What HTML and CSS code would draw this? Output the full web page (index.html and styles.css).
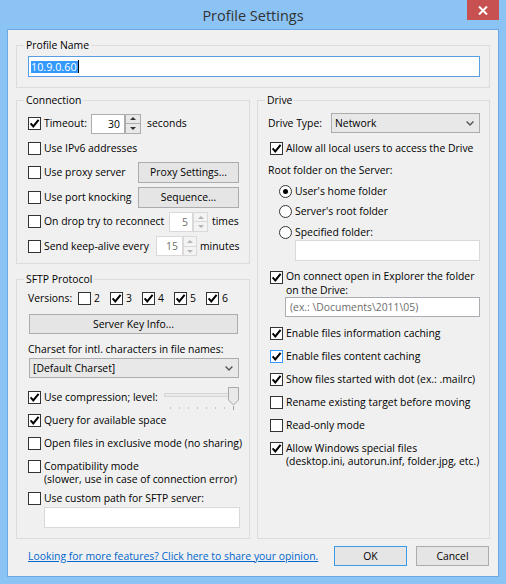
FILE: index.html
```html
<!DOCTYPE html>
<html>
<head>
<meta charset="utf-8">
<title>Profile Settings</title>
<link rel="stylesheet" href="styles.css">
</head>
<body>
<div class="window">
  <div class="titlebar">
    <div class="tb-spacer"></div>
    <div class="title">Profile Settings</div>
    <div class="close"><svg width="10" height="9" viewBox="0 0 10 9"><path d="M1 0.5 9 8.5 M9 0.5 1 8.5" stroke="#fff" stroke-width="2"/></svg></div>
  </div>
  <div class="client">
    <div class="group g-profile">
      <div class="legend">Profile Name</div>
      <div class="textbox focused"><span class="sel">10.9.0.60</span><span class="caret"></span></div>
    </div>

    <div class="columns">
      <div class="col-left">
        <div class="group g-conn">
          <div class="legend">Connection</div>
          <div class="rows">
            <div class="row">
              <div class="cbl w-timeout"><span class="cb"><svg viewBox="0 0 11 11"><path d="M1.6 5.4 4.3 8.4 9.6 1.8" /></svg></span>Timeout:</div>
              <div class="spin"><div class="spin-val sv-timeout">30</div><div class="spin-btns sb-16"><span class="up"></span><span class="down"></span></div></div>
              <span class="unit u-seconds">seconds</span>
            </div>
            <div class="row">
              <div class="cbl"><span class="cb"></span>Use IPv6 addresses</div>
            </div>
            <div class="row">
              <div class="cbl w-proxy"><span class="cb"></span>Use proxy server</div>
              <div class="btn btn-conn">Proxy Settings...</div>
            </div>
            <div class="row">
              <div class="cbl w-proxy"><span class="cb"></span>Use port knocking</div>
              <div class="btn btn-conn">Sequence...</div>
            </div>
            <div class="row">
              <div class="cbl w-drop"><span class="cb"></span>On drop try to reconnect</div>
              <div class="spin dis"><div class="spin-val sv-drop">5</div><div class="spin-btns sb-15"><span class="up"></span><span class="down"></span></div></div>
              <span class="unit u-times">times</span>
            </div>
            <div class="row">
              <div class="cbl w-keep"><span class="cb"></span>Send keep-alive every</div>
              <div class="spin dis"><div class="spin-val sv-keep">15</div><div class="spin-btns sb-14"><span class="up"></span><span class="down"></span></div></div>
              <span class="unit u-minutes">minutes</span>
            </div>
          </div>
        </div>

        <div class="group g-sftp">
          <div class="legend">SFTP Protocol</div>
          <div class="row versions">
            <span class="ver-label">Versions:</span>
            <div class="ver"><span class="cb"></span>2</div>
            <div class="ver"><span class="cb"><svg viewBox="0 0 11 11"><path d="M1.6 5.4 4.3 8.4 9.6 1.8" /></svg></span>3</div>
            <div class="ver"><span class="cb"><svg viewBox="0 0 11 11"><path d="M1.6 5.4 4.3 8.4 9.6 1.8" /></svg></span>4</div>
            <div class="ver"><span class="cb"><svg viewBox="0 0 11 11"><path d="M1.6 5.4 4.3 8.4 9.6 1.8" /></svg></span>5</div>
            <div class="ver"><span class="cb"><svg viewBox="0 0 11 11"><path d="M1.6 5.4 4.3 8.4 9.6 1.8" /></svg></span>6</div>
          </div>
          <div class="btn btn-key">Server Key Info...</div>
          <div class="plain charset-label">Charset for intl. characters in file names:</div>
          <div class="select sel-charset"><span class="sel-val">[Default Charset]</span><svg class="chev" width="8" height="5" viewBox="0 0 8 5"><path d="M0.6 0.6 4 4 7.4 0.6" /></svg></div>
          <div class="row comp-row">
            <div class="cbl w-comp"><span class="cb"><svg viewBox="0 0 11 11"><path d="M1.6 5.4 4.3 8.4 9.6 1.8" /></svg></span>Use compression; level:</div>
            <svg class="slider" width="76" height="24" viewBox="0 0 76 24">
              <rect x="0.5" y="6.5" width="69" height="3" fill="#e7eaea" stroke="#d6d6d6"/>
              <g fill="#c4c4c4">
                <rect x="6" y="20" width="1" height="2"/>
                <rect x="15" y="20" width="1" height="2"/>
                <rect x="24" y="20" width="1" height="2"/>
                <rect x="33" y="20" width="1" height="2"/>
                <rect x="42" y="20" width="1" height="2"/>
                <rect x="51" y="20" width="1" height="2"/>
                <rect x="60" y="20" width="1" height="2"/>
              </g>
              <rect x="69" y="19" width="1" height="4" fill="#a0a0a0"/>
              <path d="M64.5 0.5 H74.5 V13 L69.5 18 L64.5 13 Z" fill="#e9e9e9" stroke="#a8a8a8"/>
            </svg>
          </div>
          <div class="row cbrow query-row">
            <div class="cbl"><span class="cb"><svg viewBox="0 0 11 11"><path d="M1.6 5.4 4.3 8.4 9.6 1.8" /></svg></span>Query for available space</div>
          </div>
          <div class="row cbrow excl-row">
            <div class="cbl"><span class="cb"></span>Open files in exclusive mode (no sharing)</div>
          </div>
          <div class="cbl multi compat-row"><span class="cb"></span><span class="ml13">Compatibility mode<br>(slower, use in case of connection error)</span></div>
          <div class="row cbrow custom-row">
            <div class="cbl"><span class="cb"></span>Use custom path for SFTP server:</div>
          </div>
          <div class="textbox dis tb-custom"></div>
        </div>
      </div>

      <div class="group g-drive">
        <div class="legend">Drive</div>
        <div class="row drive-type">
          <span class="dt-label">Drive Type:</span>
          <div class="select sel-drive"><span class="sel-val">Network</span><svg class="chev" width="8" height="5" viewBox="0 0 8 5"><path d="M0.6 0.6 4 4 7.4 0.6" /></svg></div>
        </div>
        <div class="row cbrow d-allow">
          <div class="cbl"><span class="cb"><svg viewBox="0 0 11 11"><path d="M1.6 5.4 4.3 8.4 9.6 1.8" /></svg></span>Allow all local users to access the Drive</div>
        </div>
        <div class="plain root-label">Root folder on the Server:</div>
        <div class="row cbrow radio-row r1"><div class="cbl"><span class="rb on"></span>User's home folder</div></div>
        <div class="row cbrow radio-row r2"><div class="cbl"><span class="rb"></span>Server's root folder</div></div>
        <div class="row cbrow radio-row r3"><div class="cbl"><span class="rb"></span>Specified folder:</div></div>
        <div class="textbox dis tb-spec"></div>
        <div class="cbl multi d-connect"><span class="cb cb-down"><svg viewBox="0 0 11 11"><path d="M1.6 5.4 4.3 8.4 9.6 1.8" /></svg></span><span class="ml14">On connect open in Explorer the folder<br>on the Drive:</span></div>
        <div class="textbox tb-ex"><span class="ph">(ex.: \Documents\2011\05)</span></div>
        <div class="row cbrow d-r d-first"><div class="cbl"><span class="cb"><svg viewBox="0 0 11 11"><path d="M1.6 5.4 4.3 8.4 9.6 1.8" /></svg></span>Enable files information caching</div></div>
        <div class="row cbrow d-r"><div class="cbl"><span class="cb hover"><svg viewBox="0 0 11 11"><path d="M1.6 5.4 4.3 8.4 9.6 1.8" /></svg></span>Enable files content caching</div></div>
        <div class="row cbrow d-r"><div class="cbl"><span class="cb"><svg viewBox="0 0 11 11"><path d="M1.6 5.4 4.3 8.4 9.6 1.8" /></svg></span>Show files started with dot (ex.: .mailrc)</div></div>
        <div class="row cbrow d-r"><div class="cbl"><span class="cb"></span>Rename existing target before moving</div></div>
        <div class="row cbrow d-r"><div class="cbl"><span class="cb"></span>Read-only mode</div></div>
        <div class="cbl multi d-special"><span class="cb"><svg viewBox="0 0 11 11"><path d="M1.6 5.4 4.3 8.4 9.6 1.8" /></svg></span><span class="ml13">Allow Windows special files<br>(desktop.ini, autorun.inf, folder.jpg, etc.)</span></div>
      </div>
    </div>

    <div class="footer">
      <a class="link" href="#">Looking for more features? Click here to share your opinion.</a>
      <div class="buttons">
        <div class="btn btn-dlg default">OK</div>
        <div class="btn btn-dlg">Cancel</div>
      </div>
    </div>
  </div>
</div>
</body>
</html>
```

FILE: styles.css
```css
* { box-sizing: border-box; }

body {
  margin: 0;
  font-family: "Open Sans", "Segoe UI", "Noto Sans", sans-serif;
  font-size: 10.4px;
  line-height: 13px;
  color: #000;
}

.window {
  width: 506px;
  height: 584px;
  background: #8bc3f5;
  display: flex;
  flex-direction: column;
  padding: 0 7px 7px 7px;
}

.titlebar {
  height: 29px;
  display: flex;
  align-items: flex-start;
  flex: none;
}
.tb-spacer { width: 32px; flex: none; }
.title {
  flex: 1;
  text-align: center;
  font-size: 14.5px;
  line-height: 29px;
  padding-top: 1px;
  color: #333;
}
.close {
  width: 32px;
  height: 20px;
  flex: none;
  background: #c75050;
  display: flex;
  align-items: center;
  justify-content: center;
}

.client {
  flex: 1;
  background: #f0f0f0;
  border: 1px solid #6aa9e4;
  padding: 15px 8px 0 8px;
  display: flex;
  flex-direction: column;
}

.group {
  border: 1px solid #dcdcdc;
  display: flex;
  flex-direction: column;
  flex: none;
}
.legend {
  align-self: flex-start;
  background: #f0f0f0;
  padding: 0 2px;
  line-height: 16px;
  margin-top: -9px;
  margin-left: -4px;
}

.row { display: flex; align-items: center; flex: none; }
.cbrow { height: 16px; }

.cbl {
  display: flex;
  align-items: center;
  gap: 3px;
  white-space: nowrap;
  flex: none;
}
.cbl.multi { align-items: flex-start; }

.cb {
  width: 13px;
  height: 13px;
  border: 1px solid #333;
  background: #fff;
  flex: none;
  display: flex;
  align-items: center;
  justify-content: center;
}
.cb svg { width: 11px; height: 11px; display: block; }
.cb svg path { fill: none; stroke: #000; stroke-width: 2; }
.cb.hover { border-color: #3399ff; }

.rb {
  width: 13px;
  height: 13px;
  border: 1px solid #333;
  border-radius: 50%;
  background: #fff;
  flex: none;
  display: flex;
  align-items: center;
  justify-content: center;
}
.rb.on::after {
  content: "";
  width: 5px;
  height: 5px;
  border-radius: 50%;
  background: #000;
}

.textbox {
  height: 21px;
  border: 1px solid #abadb3;
  background: #fff;
  display: flex;
  align-items: center;
  padding-left: 2px;
  flex: none;
}
.textbox.focused { border-color: #569de5; }
.textbox.dis { border-color: #d9d9d9; }
.sel {
  background: #3399ff;
  color: #fff;
  line-height: 12px;
  font-size: 10.8px;
  padding: 0 1px 0 0;
}
.caret { width: 1px; height: 13px; background: #000; }
.ph { color: #6d6d6d; padding-left: 2px; }

.btn {
  height: 20px;
  border: 1px solid #acacac;
  background: #e5e5e5;
  display: flex;
  align-items: center;
  justify-content: center;
  flex: none;
  white-space: nowrap;
}

.select {
  height: 20px;
  border: 1px solid #acacac;
  background: #e8e8e8;
  display: flex;
  align-items: center;
  padding-left: 3px;
  flex: none;
}
.sel-val { flex: 1; }
.chev { margin-right: 5px; flex: none; }
.chev path { fill: none; stroke: #555; stroke-width: 1.4; }

.spin { display: flex; height: 20px; flex: none; }
.spin-val {
  border: 1px solid #abadb3;
  background: #fff;
  text-align: right;
  padding-right: 4px;
  line-height: 18px;
}
.spin-btns {
  display: flex;
  flex-direction: column;
  height: 20px;
}
.spin-btns span {
  flex: 1;
  border: 1px solid #acacac;
  background: #e8e8e8;
  display: flex;
  align-items: center;
  justify-content: center;
}
.spin-btns span + span { border-top: none; }
.spin-btns .up::after {
  content: "";
  border-left: 3px solid transparent;
  border-right: 3px solid transparent;
  border-bottom: 3px solid #333;
}
.spin-btns .down::after {
  content: "";
  border-left: 3px solid transparent;
  border-right: 3px solid transparent;
  border-top: 3px solid #333;
}
.spin.dis .spin-val { color: #6d6d6d; border-color: #d9d9d9; }
.spin.dis .spin-btns span { border-color: #d9d9d9; background: #f3f3f3; }
.spin.dis .spin-btns .up::after { border-bottom-color: #b5b5b5; }
.spin.dis .spin-btns .down::after { border-top-color: #b5b5b5; }

.sb-16 { width: 16px; }
.sb-15 { width: 15px; }
.sb-14 { width: 14px; }
.sv-timeout { width: 34px; }
.sv-drop { width: 24px; }
.sv-keep { width: 27px; }

/* profile */
.g-profile {
  height: 43px;
  padding: 0 9px 0 11px;
}
.g-profile .textbox { margin-top: 3px; }

.columns {
  display: flex;
  gap: 7px;
  margin-top: 12px;
  flex: none;
}
.col-left {
  width: 234px;
  display: flex;
  flex-direction: column;
}

/* connection */
.g-conn {
  height: 164px;
  padding: 0 10px 0 11px;
}
.g-conn .rows {
  margin-top: 5px;
  display: flex;
  flex-direction: column;
  gap: 3.6px;
}
.g-conn .row { height: 21px; }
.w-timeout { width: 63px; }
.w-proxy { width: 110px; }
.w-drop { width: 141px; }
.w-keep { width: 128px; }
.btn-conn { width: 101px; height: 21px; }
.u-seconds { margin-left: 6px; }
.u-times { margin-left: 4px; }
.u-minutes { margin-left: 3px; }

/* sftp */
.g-sftp {
  height: 260px;
  margin-top: 15px;
  padding: 0 11px 0 11px;
}
.versions { margin-top: 2px; height: 19px; }
.ver-label { width: 50px; flex: none; }
.ver { width: 32px; display: flex; align-items: center; gap: 3px; flex: none; }
.btn-key { margin-top: 6px; margin-left: 1px; }
.plain { line-height: 16px; flex: none; white-space: nowrap; }
.charset-label { margin-top: 7px; }
.sel-charset { margin-top: 1px; margin-left: 1px; margin-right: -1px; }
.comp-row { margin-top: 9px; height: 21px; align-items: flex-start; }
.comp-row .cbl { height: 21px; }
.w-comp { width: 136px; }
.slider { flex: none; display: block; overflow: visible; }
.query-row { margin-top: 4px; }
.excl-row { margin-top: 7px; }
.compat-row { margin-top: 8.5px; }
.ml13 { line-height: 13px; }
.ml14 { line-height: 14px; }
.custom-row { margin-top: 5px; }
.tb-custom { margin-top: 0.5px; margin-left: 16px; width: 196px; }

/* drive */
.g-drive {
  width: 233px;
  height: 439px;
  padding: 0 9px 0 10px;
}
.g-drive .legend { margin-left: -3px; }
.drive-type { margin-top: 5px; height: 20px; }
.dt-label { width: 63px; flex: none; }
.sel-drive { flex: 1; }
.d-allow { margin-top: 7.5px; margin-left: 2px; }
.root-label { margin-top: 5.5px; }
.radio-row { margin-left: 11px; }
.r1 { margin-top: 5px; }
.r2 { margin-top: 4px; }
.r3 { margin-top: 5px; }
.tb-spec { margin-left: 27px; }
.d-connect { margin-top: 7.5px; margin-left: 2px; align-items: center; }
.cb-down { margin-top: 2px; }
.tb-ex { margin-top: 0.5px; margin-left: 17px; height: 20px; }
.d-r { margin-top: 7px; margin-left: 2px; }
.d-first { margin-top: 8px; }
.d-special { margin-top: 9px; margin-left: 2px; }

/* footer */
.footer {
  display: flex;
  align-items: center;
  margin-top: 7px;
  height: 20px;
  padding: 0 1px 0 12px;
  flex: none;
}
.link {
  color: #0066cc;
  text-decoration: underline;
  flex: 1;
  white-space: nowrap;
}
.buttons { display: flex; gap: 9px; }
.btn-dlg { width: 73px; height: 20px; }
.btn-dlg.default { border-color: #3c9be6; }
```
